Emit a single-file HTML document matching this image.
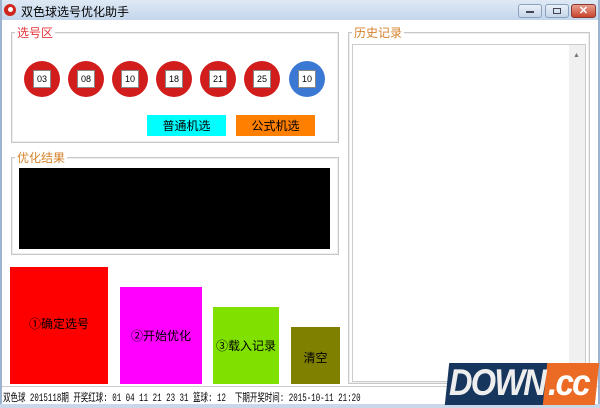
<!DOCTYPE html>
<html><head><meta charset="utf-8"><style>
*{margin:0;padding:0;box-sizing:border-box}
body{width:600px;height:408px;position:relative;overflow:hidden;background:#fff;font-family:"Liberation Sans","Noto Sans CJK SC",sans-serif;font-size:12px}
.a{position:absolute}
.grp{position:absolute;border:1px solid #c8c8c8;box-shadow:inset 0 0 0 1px #eee}
.lg{position:absolute;background:#fff;padding:0 2px;font-size:12px;line-height:14px}
.ball{position:absolute;width:36px;height:36px;border-radius:50%;background:#d21d1d}
.ball span{position:absolute;left:9px;top:9px;width:18px;height:18px;background:#fff;border:1px solid #888;font-size:9px;line-height:16px;text-align:center;color:#000}
.btn{position:absolute;display:flex;align-items:center;justify-content:center;font-size:12px;color:#000}
</style></head><body>
<div class="a" style="left:0;top:0;width:600px;height:20px;background:linear-gradient(#dfe9f5,#c3d6ec)"></div>
<div class="a" style="left:0;top:0;width:2px;height:408px;background:#9db3cf"></div>
<div class="a" style="left:598px;top:0;width:2px;height:408px;background:#9db3cf"></div>
<div class="a" style="left:4px;top:4px;width:12px;height:12px;border-radius:50%;background:#d0261e"></div>
<div class="a" style="left:8px;top:7px;width:5px;height:5px;border-radius:50%;background:#fff"></div>
<div class="a" style="left:21px;top:3px;font-size:12px;color:#000">双色球选号优化助手</div>
<div class="a" style="left:518px;top:4px;width:24px;height:14px;border:1px solid #8aa0bd;border-radius:3px;background:linear-gradient(#e9f0f8,#c6d6ea)"></div>
<div class="a" style="left:526px;top:11px;width:8px;height:2px;background:#445"></div>
<div class="a" style="left:545px;top:4px;width:24px;height:14px;border:1px solid #8aa0bd;border-radius:3px;background:linear-gradient(#e9f0f8,#c6d6ea)"></div>
<div class="a" style="left:553px;top:8px;width:8px;height:6px;border:1px solid #445"></div>
<div class="a" style="left:571px;top:4px;width:25px;height:14px;border:1px solid #8a3a30;border-radius:3px;background:linear-gradient(#e8a08e,#c9452f);color:#fff;font-size:11px;font-weight:bold;text-align:center;line-height:12px">✕</div>

<div class="grp" style="left:11px;top:32px;width:328px;height:111px"></div>
<div class="lg" style="left:15px;top:26px;color:#e8343a">选号区</div>
<div class="ball" style="left:24px;top:61px"><span>03</span></div>
<div class="ball" style="left:68px;top:61px"><span>08</span></div>
<div class="ball" style="left:112px;top:61px"><span>10</span></div>
<div class="ball" style="left:156px;top:61px"><span>18</span></div>
<div class="ball" style="left:200px;top:61px"><span>21</span></div>
<div class="ball" style="left:244px;top:61px"><span>25</span></div>
<div class="ball" style="left:289px;top:61px;background:#3a78d4"><span>10</span></div>
<div class="btn" style="left:147px;top:115px;width:79px;height:21px;background:#00ffff">普通机选</div>
<div class="btn" style="left:236px;top:115px;width:79px;height:21px;background:#ff8000">公式机选</div>

<div class="grp" style="left:11px;top:157px;width:328px;height:98px"></div>
<div class="lg" style="left:15px;top:151px;color:#d4822c">优化结果</div>
<div class="a" style="left:19px;top:168px;width:311px;height:81px;background:#000"></div>

<div class="grp" style="left:348px;top:32px;width:242px;height:352px"></div>
<div class="lg" style="left:352px;top:26px;color:#d4822c">历史记录</div>
<div class="a" style="left:352px;top:44px;width:234px;height:338px;border:1px solid #ccc"></div>
<div class="a" style="left:569px;top:45px;width:16px;height:336px;background:#f0f0f0"></div>
<div class="a" style="left:573px;top:52px;font-size:7px;color:#777">▲</div>

<div class="btn" style="left:10px;top:267px;width:98px;height:117px;background:#ff0000;padding-bottom:4px">①确定选号</div>
<div class="btn" style="left:120px;top:287px;width:82px;height:97px;background:#ff00ff">②开始优化</div>
<div class="btn" style="left:213px;top:307px;width:66px;height:77px;background:#80e000">③载入记录</div>
<div class="btn" style="left:291px;top:327px;width:49px;height:57px;background:#808000;padding-top:4px">清空</div>

<div class="a" style="left:2px;top:386px;width:596px;height:1px;background:#ccc"></div>
<div class="a" style="left:3px;top:389px;font-family:'Liberation Mono','Noto Sans CJK SC',monospace;font-size:11px;color:#000;white-space:pre;transform:scaleX(0.68);transform-origin:left top">双色球 2015118期 开奖红球: 01 04 11 21 23 31 篮球: 12  下期开奖时间: 2015-10-11 21:20</div>
<div class="a" style="left:0;top:404px;width:600px;height:4px;background:#c9d7e8"></div>

<div class="a" style="left:447px;top:363px;width:100px;height:42px;background:#17365d;transform:skewX(-6deg)"></div>
<div class="a" style="left:545px;top:363px;width:52px;height:42px;background:#ec6b24;transform:skewX(-6deg)"></div>
<div class="a" style="left:449px;top:362px;font-size:37px;line-height:42px;font-weight:bold;font-style:italic;color:#eee;letter-spacing:-2px;transform:scaleX(0.88);transform-origin:left top">DOWN</div>
<div class="a" style="left:548px;top:362px;font-size:37px;line-height:42px;font-weight:bold;font-style:italic;color:#fff;letter-spacing:-2px;transform:scaleX(0.9);transform-origin:left top">.cc</div>
</body></html>
